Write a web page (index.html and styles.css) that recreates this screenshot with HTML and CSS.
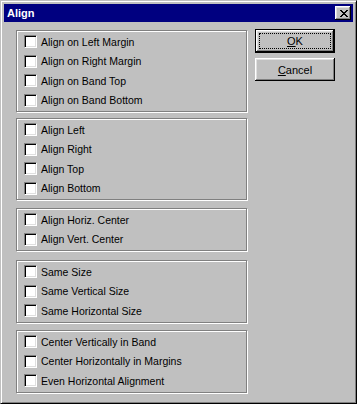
FILE: index.html
```html
<!DOCTYPE html>
<html lang="en">
<head>
    <meta charset="UTF-8">
    <meta name="viewport" content="width=device-width, initial-scale=1.0">
    <title>Align</title>
    <link rel="stylesheet" href="styles.css">
</head>
<body>
<div class="window">
    <div class="title-bar">
        <span class="title">Align</span>
        <button type="button" class="close-btn" aria-label="Close">
            <svg width="8" height="7" viewBox="0 0 8 7" shape-rendering="crispEdges">
                <path d="M0 0h2v1h-2zM6 0h2v1h-2zM1 1h2v1h-2zM5 1h2v1h-2zM2 2h4v1h-4zM3 3h2v1h-2zM2 4h4v1h-4zM1 5h2v1h-2zM5 5h2v1h-2zM0 6h2v1h-2zM6 6h2v1h-2z" fill="#000"/>
            </svg>
        </button>
    </div>

    <div class="dialog-body">
        <div class="groups">
            <div class="group">
                <label class="check"><span class="box"></span>Align on Left Margin</label>
                <label class="check"><span class="box"></span>Align on Right Margin</label>
                <label class="check"><span class="box"></span>Align on Band Top</label>
                <label class="check"><span class="box"></span>Align on Band Bottom</label>
            </div>
            <div class="group group-2">
                <label class="check"><span class="box"></span>Align Left</label>
                <label class="check"><span class="box"></span>Align Right</label>
                <label class="check"><span class="box"></span>Align Top</label>
                <label class="check"><span class="box"></span>Align Bottom</label>
            </div>
            <div class="group group-3">
                <label class="check"><span class="box"></span>Align Horiz. Center</label>
                <label class="check"><span class="box"></span>Align Vert. Center</label>
            </div>
            <div class="group group-4">
                <label class="check"><span class="box"></span>Same Size</label>
                <label class="check"><span class="box"></span>Same Vertical Size</label>
                <label class="check"><span class="box"></span>Same Horizontal Size</label>
            </div>
            <div class="group group-5">
                <label class="check"><span class="box"></span>Center Vertically in Band</label>
                <label class="check"><span class="box"></span>Center Horizontally in Margins</label>
                <label class="check"><span class="box"></span>Even Horizontal Alignment</label>
            </div>
        </div>

        <div class="buttons">
            <button type="button" class="btn btn-default"><u>O</u>K</button>
            <button type="button" class="btn"><u>C</u>ancel</button>
        </div>
    </div>
</div>
</body>
</html>
```

FILE: styles.css
```css
body {
    margin: 0;
    padding: 0;
    background-color: #c0c0c0;
    font-family: "Liberation Sans", Arial, sans-serif;
    font-size: 10.5px;
    color: #000;
}
.window {
    width: 357px;
    height: 404px;
    box-sizing: border-box;
    padding: 2px;
    background: #c0c0c0;
    border: 1px solid;
    border-color: #c0c0c0 #000 #000 #c0c0c0;
    box-shadow: inset 1px 1px #fff, inset -1px -1px #808080;
}
.title-bar {
    display: flex;
    align-items: center;
    justify-content: space-between;
    height: 18px;
    margin: 1px;
    padding: 0 2px 0 3px;
    background: #000080;
}
.title {
    color: #fff;
    font-weight: bold;
    font-size: 11px;
}
.close-btn {
    width: 16px;
    height: 14px;
    padding: 0 0 0 1px;
    border: none;
    background: #c0c0c0;
    display: flex;
    align-items: center;
    justify-content: center;
    box-shadow: inset -1px -1px #000, inset 1px 1px #fff, inset -2px -2px #808080, inset 2px 2px #dfdfdf;
}
.dialog-body {
    display: flex;
    padding: 7px 0 0 13px;
}
.groups {
    width: 231px;
}
.group {
    border: 1px solid #808080;
    box-shadow: 1px 1px 0 #fff, inset 1px 1px 0 #fff;
    padding: 1px 0 1px 7px;
}
.group-2 {
    margin-top: 6px;
}
.group-3 {
    margin-top: 8px;
}
.group-4 {
    margin-top: 9px;
}
.group-5 {
    margin-top: 7.5px;
}
.check {
    display: flex;
    align-items: center;
    gap: 4px;
    height: 19.5px;
    white-space: nowrap;
}
.box {
    width: 13px;
    height: 13px;
    box-sizing: border-box;
    background: #fff;
    border: 1px solid;
    border-color: #808080 #fff #fff #808080;
    box-shadow: inset 1px 1px #000, inset -1px -1px #dfdfdf;
}
.buttons {
    display: flex;
    flex-direction: column;
    gap: 5px;
    margin: -1px 0 0 8px;
}
.btn {
    width: 80px;
    height: 23px;
    padding: 0;
    border: none;
    background: #c0c0c0;
    font-family: inherit;
    font-size: 11px;
    color: #000;
    box-shadow: inset -1px -1px #000, inset 1px 1px #fff, inset -2px -2px #808080, inset 2px 2px #dfdfdf;
}
.btn u {
    text-underline-offset: 1px;
}
.btn-default {
    height: 24px;
    border: 1px solid #000;
    outline: 1px dotted #000;
    outline-offset: -5px;
}
```
